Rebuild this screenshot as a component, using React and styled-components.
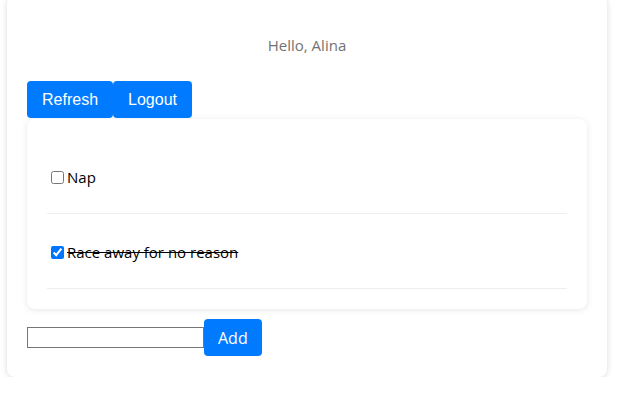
import React, { useState } from 'react';
import styled, { createGlobalStyle } from 'styled-components';

const GlobalStyle = createGlobalStyle`
  body {
    margin: 0;
    background: #fff;
    font-family: "Open Sans", "Noto Sans", sans-serif;
  }
`;

const Page = styled.div`
  padding: 0 10px 0 7px;
`;

const Card = styled.div`
  width: 600px;
  box-sizing: border-box;
  margin-top: -4px;
  padding: 20px 20px 21px;
  background: #fff;
  border-radius: 8px;
  box-shadow: 0 1px 6px rgba(0, 0, 0, 0.14);
`;

const Greeting = styled.div`
  text-align: center;
  color: #727272;
  font-size: 15px;
  line-height: 20px;
  padding-top: 19px;
  margin-bottom: 26px;
`;

const Toolbar = styled.div`
  display: flex;
`;

const Button = styled.button`
  height: 37px;
  padding: 0 ${(p) => (p.$alt ? '14px' : '15px')};
  border: none;
  border-radius: 4px;
  background: #007bff;
  color: #fff;
  font-family: ${(p) => (p.$alt ? '"Open Sans", sans-serif' : '"Liberation Sans", Arial, sans-serif')};
  font-size: 16px;
  cursor: pointer;
`;

const List = styled.div`
  margin-top: 1px;
  padding: 20px;
  border-radius: 8px;
  box-shadow: 0 1px 6px rgba(0, 0, 0, 0.1);
`;

const Item = styled.label`
  display: flex;
  align-items: center;
  height: 75px;
  padding-top: 2px;
  box-sizing: border-box;
  border-bottom: 1px solid #eee;
  font-size: 15px;
  color: #000;
  text-decoration: ${(p) => (p.$done ? 'line-through' : 'none')};
  input {
    margin: 0 3px 0 4px;
    width: 13px;
    height: 13px;
  }
`;

const AddRow = styled.div`
  display: flex;
  align-items: center;
  margin-top: 10px;
`;

const TextInput = styled.input`
  width: 177px;
  height: 21px;
  box-sizing: border-box;
  border: 1px solid #767676;
  padding: 1px 2px;
  margin: 0;
`;

export default function App() {
  const [todos, setTodos] = useState([
    { text: 'Nap', done: false },
    { text: 'Race away for no reason', done: true },
  ]);
  const toggle = (i) =>
    setTodos(todos.map((t, j) => (j === i ? { ...t, done: !t.done } : t)));

  return (
    <Page>
      <GlobalStyle />
      <Card>
        <Greeting>Hello, Alina</Greeting>
        <Toolbar>
          <Button>Refresh</Button>
          <Button>Logout</Button>
        </Toolbar>
        <List>
          {todos.map((t, i) => (
            <Item key={t.text} $done={t.done}>
              <input type="checkbox" checked={t.done} onChange={() => toggle(i)} />
              {t.text}
            </Item>
          ))}
        </List>
        <AddRow>
          <TextInput type="text" />
          <Button $alt>Add</Button>
        </AddRow>
      </Card>
    </Page>
  );
}
